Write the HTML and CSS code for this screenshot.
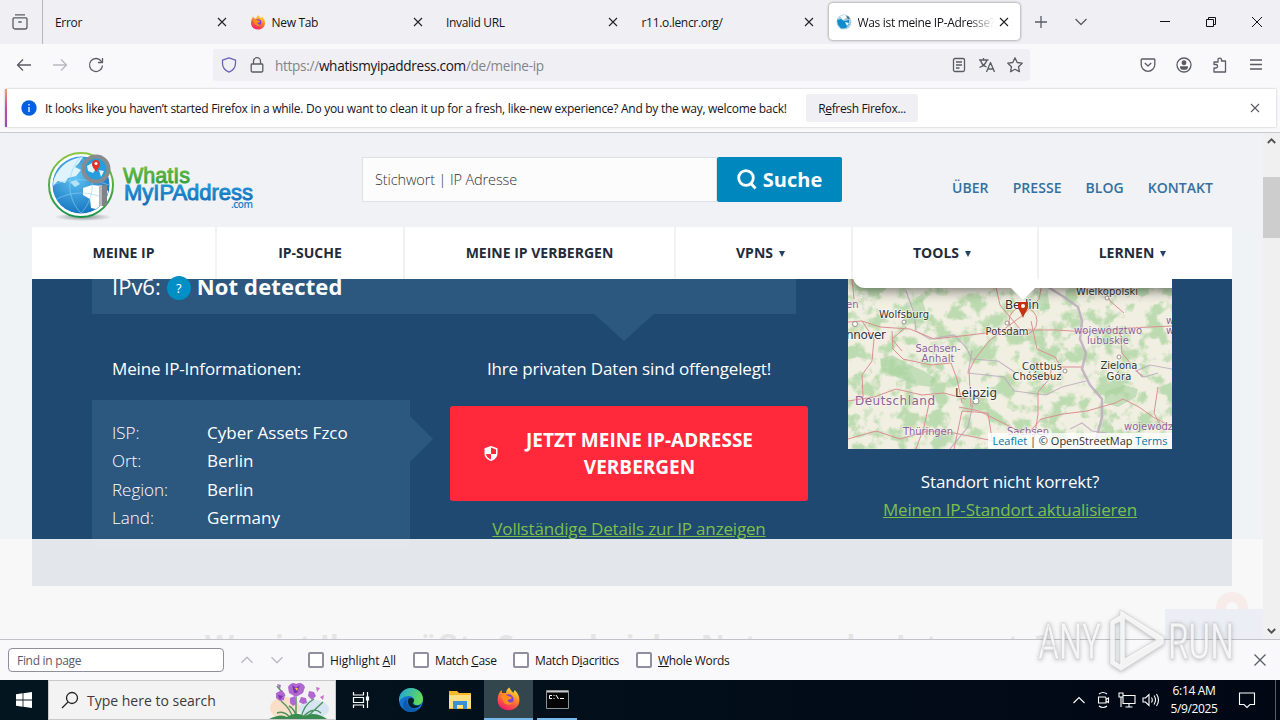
FILE: index.html
```html
<!DOCTYPE html>
<html lang="de">
<head>
    <meta charset="UTF-8">
    <meta name="viewport" content="width=device-width, initial-scale=1.0">
    <title>Was ist meine IP-Adresse?</title>
    <link rel="stylesheet" href="styles.css">
</head>
<body>
    <!-- Tab strip -->
    <div class="tabs">
        <div class="tab-view">
            <svg width="18" height="18" viewBox="0 0 18 18" class="line"><path d="M4 1.800h10M3 4.800h12a1 1 0 0 1 1 1V14a2 2 0 0 1-2 2H4a2 2 0 0 1-2-2V5.800a1 1 0 0 1 1-1zM7.300 9h3.400"/></svg>
        </div>
        <div class="tab"><span>Error</span><svg class="x" viewBox="0 0 10 10"><path d="M1 1l8 8M9 1l-8 8"/></svg></div>
        <div class="tab">
            <svg class="favicon" viewBox="0 0 32 32"><use href="#firefox"/></svg>
            <span>New Tab</span><svg class="x" viewBox="0 0 10 10"><path d="M1 1l8 8M9 1l-8 8"/></svg>
        </div>
        <div class="tab"><span>Invalid URL</span><svg class="x" viewBox="0 0 10 10"><path d="M1 1l8 8M9 1l-8 8"/></svg></div>
        <div class="tab"><span>r11.o.lencr.org/</span><svg class="x" viewBox="0 0 10 10"><path d="M1 1l8 8M9 1l-8 8"/></svg></div>
        <div class="tab active">
            <svg class="favicon" viewBox="0 0 16 16"><circle cx="8" cy="8" r="7.500" fill="#a9cfdf"/><path d="M1 6l4-1 3 2 5-1v4l-3 4-5 .5-3-4z" fill="#118ccf"/><path d="M4 2l5-1 2 2-4 3zM9 8l4 1-2 3z" fill="#f4fbfd"/><path d="M10 1.500a7 7 0 0 1 4 3l-2 1z" fill="#58727d"/></svg>
            <span class="t-was">Was ist meine IP-Adresse?</span><svg class="x" viewBox="0 0 10 10"><path d="M1 1l8 8M9 1l-8 8"/></svg>
        </div>
        <div class="tab-tools">
            <svg width="12" height="12" viewBox="0 0 12 12" class="line"><path d="M6 0v12M0 6h12"/></svg>
            <svg width="12" height="8" viewBox="0 0 12 8" class="line"><path d="M.5 1L6 6.500 11.500 1"/></svg>
        </div>
        <div class="win-buttons">
            <svg width="12" height="12" viewBox="0 0 12 12"><path d="M1 5.500h10"/></svg>
            <svg width="12" height="12" viewBox="0 0 12 12"><path d="M1.500 3.500h7v7h-7zM3.500 3V1.500h7v7H9"/></svg>
            <svg width="12" height="12" viewBox="0 0 12 12"><path d="M1 1l10 10M11 1L1 11"/></svg>
        </div>
    </div>

    <!-- Address bar -->
    <div class="toolbar">
        <div class="nav-buttons">
            <svg width="16" height="16" viewBox="0 0 16 16" class="line"><path d="M15 8H1.500M7 2.500L1.500 8 7 13.500"/></svg>
            <svg width="16" height="16" viewBox="0 0 16 16" class="line dim"><path d="M1 8h13.500M9 2.500L14.500 8 9 13.500"/></svg>
            <svg width="16" height="16" viewBox="0 0 16 16" class="line"><path d="M13.500 4.500A6.500 6.500 0 1 0 14.500 8.500M14.500 1v4.500H10"/></svg>
        </div>
        <div class="urlbar">
            <svg width="16" height="16" viewBox="0 0 16 16" class="line shield"><path d="M8 .8l6.500 2.400v3.300c0 4-2.600 7-6.500 8.700C4.100 13.500 1.500 10.500 1.500 6.500V3.200z"/></svg>
            <svg width="16" height="16" viewBox="0 0 16 16" class="line"><path d="M3 7h10a.8.8 0 0 1 .8.8v6a1.200 1.200 0 0 1-1.200 1.200H3.400a1.200 1.200 0 0 1-1.200-1.200v-6A.8.8 0 0 1 3 7zM4.500 7V4.200a3.500 3.500 0 0 1 7 0V7"/></svg>
            <span class="url">https://<b>whatismyipaddress.com</b>/de/meine-ip</span>
            <div class="url-actions">
                <svg width="16" height="16" viewBox="0 0 16 16" class="line"><rect x="2.500" y="1.500" width="11" height="13" rx="1.500"/><path d="M5 5h6M5 8h6M5 11h3.500"/></svg>
                <svg width="18" height="16" viewBox="0 0 18 16" class="line"><path d="M1 3h9.500M5.500 1v2M2.500 3c1 4 3.500 6 6 7M8.800 3C8 6.500 5 9 1.500 10.500M8.500 15l4-9.500 4 9.500M10 12h5"/></svg>
                <svg width="16" height="16" viewBox="0 0 16 16" class="line"><path d="M8 .9l2.200 4.600 5 .7-3.700 3.500.9 5L8 12.300l-4.400 2.400.9-5L.8 6.200l5-.7z"/></svg>
            </div>
        </div>
        <div class="menu-buttons">
            <svg width="16" height="16" viewBox="0 0 16 16" class="line"><path d="M2 2h12a.8.8 0 0 1 .8.800V7.500a6.800 6.800 0 0 1-13.600 0V2.800A.8.800 0 0 1 2 2zM4.800 6L8 9l3.200-3"/></svg>
            <svg width="16" height="16" viewBox="0 0 16 16" class="line"><circle cx="8" cy="8" r="7"/><circle cx="8" cy="5.800" r="1.800" fill="#5b5b66"/><path d="M4.600 10h6.800c0 1.400-1.300 2.200-3.400 2.200s-3.400-.8-3.400-2.200z" fill="#5b5b66"/></svg>
            <svg width="16" height="16" viewBox="0 0 16 16" class="line"><path d="M6 4V2.800a1.700 1.700 0 0 1 3.500 0V4H13.500v11H2V11h1.800a1.700 1.700 0 0 0 0-3.500H2V5h4z"/></svg>
            <svg width="16" height="16" viewBox="0 0 16 16" class="line"><path d="M2 3h12M2 7.500h12M2 12h12"/></svg>
        </div>
    </div>

    <!-- Refresh notification -->
    <div class="notice-wrap">
        <div class="notice">
            <svg width="16" height="16" viewBox="0 0 16 16"><circle cx="8" cy="8" r="7.700" fill="#0060df"/><path d="M8 7v5M8 4v1.500" stroke="#fff" stroke-width="1.300"/></svg>
            <span class="notice-text">It looks like you haven’t started Firefox in a while. Do you want to clean it up for a fresh, like-new experience? And by the way, welcome back!</span>
            <button class="refresh">R<u>e</u>fresh Firefox...</button>
            <svg class="x notice-x" viewBox="0 0 10 10"><path d="M1 1l8 8M9 1l-8 8"/></svg>
        </div>
    </div>

    <!-- Web page -->
    <div class="viewport">
        <div class="page">
            <header class="header">
                <svg class="logo" width="220" height="76" viewBox="0 0 220 76">
                    <defs>
                        <radialGradient id="sea" cx=".4" cy=".35" r=".7"><stop offset="0" stop-color="#62c4f3"/><stop offset="1" stop-color="#1272be"/></radialGradient>
                        <linearGradient id="ring" x1="0" y1="0" x2="0" y2="1"><stop offset="0" stop-color="#8cc63f"/><stop offset="1" stop-color="#159447"/></linearGradient>
                        <linearGradient id="green" x1="0" y1="0" x2="0" y2="1"><stop offset="0" stop-color="#7cc142"/><stop offset="1" stop-color="#259a3e"/></linearGradient>
                        <linearGradient id="blue" x1="0" y1="0" x2="0" y2="1"><stop offset="0" stop-color="#22a0dd"/><stop offset="1" stop-color="#1267b5"/></linearGradient>
                        <radialGradient id="shade"><stop offset="0" stop-color="#8c9094"/><stop offset="1" stop-color="#f0f2f5"/></radialGradient>
                    </defs>
                    <ellipse cx="43" cy="67" rx="29" ry="4" fill="url(#shade)"/>
                    <circle cx="41" cy="35" r="32" fill="#fff" stroke="url(#ring)" stroke-width="2"/>
                    <circle cx="41" cy="35" r="28.500" fill="url(#sea)"/>
                    <path d="M19 20c5-7 14-12 24-13l-4 6-4 4 6 3-5 6-8 2-3 5-7-2-5 5c0-6 2-11 6-16z" fill="#dff3fd"/>
                    <path d="M43 38l9-3 10 1 6 5c-1 8-5 13-12 18l-5-1-1-9-7-4z" fill="#fff"/>
                    <path d="M30 32l6-2 4 4-5 3zM23 28l3 3" fill="#b5e2f7"/>
                    <path d="M13 35c15-7 38-7 56 0M17 49c15-8 34-8 48 0M41 7c-15 15-15 41 0 56M41 7c15 15 15 41 0 56" fill="none" stroke="#8ed2f4" stroke-width=".6"/>
                    <rect x="59" y="35" width="8" height="21" fill="#7e8387"/><path d="M59 35h3v21h-3z" fill="#b6babd"/>
                    <circle cx="56" cy="19" r="12.500" fill="#269ddd" stroke="#858b90" stroke-width="4"/>
                    <path d="M47 16l5-3 5 5-4 5-5-2zM59 20l5 1-3 6z" fill="#dff3fb"/>
                    <path d="M56 22c-2-4-4-5-4-8a4 4 0 0 1 8 0c0 3-2 4-4 8z" fill="#e03427"/><circle cx="56" cy="13.500" r="1.500" fill="#fff"/>
                    <g font-family="Liberation Sans" stroke-width=".9">
                        <text x="83" y="32.500" font-size="22" fill="url(#green)" stroke="url(#green)" textLength="67" lengthAdjust="spacingAndGlyphs">WhatIs</text>
                        <text x="84" y="50" font-size="22" fill="url(#blue)" stroke="url(#blue)" textLength="129" lengthAdjust="spacingAndGlyphs">MyIPAddress</text>
                    </g>
                    <text x="191" y="58" font-family="Open Sans" font-weight="600" font-size="10" fill="#1d82c6" textLength="22">.com</text>
                </svg>
                <div class="search">
                    <div class="search-input">Stichwort | IP Adresse</div>
                    <div class="search-button">
                        <svg width="20" height="21" viewBox="0 0 20 21"><circle cx="9" cy="9" r="7.300"/><path d="M13.500 14l5 5.500"/></svg>
                        <span>Suche</span>
                    </div>
                </div>
                <div class="links">
                    <a>ÜBER</a><a>PRESSE</a><a>BLOG</a><a>KONTAKT</a>
                </div>
            </header>

            <nav class="main-nav">
                <div><span>MEINE IP</span></div>
                <div><span>IP-SUCHE</span></div>
                <div><span>MEINE IP VERBERGEN</span></div>
                <div><span>VPNS</span><i></i></div>
                <div><span>TOOLS</span><i></i></div>
                <div><span>LERNEN</span><i></i></div>
            </nav>

            <section class="hero">
                <div class="hero-main">
                    <div class="ipv6"><span class="ip-label">IPv6:</span><span class="help">?</span><strong>Not detected</strong></div>
                    <div class="hero-cols">
                        <div class="info">
                            <p class="t-info">Meine IP-Informationen:</p>
                            <div class="info-box">
                                <span>ISP:</span><b>Cyber Assets Fzco</b>
                                <span>Ort:</span><b>Berlin</b>
                                <span>Region:</span><b>Berlin</b>
                                <span>Land:</span><b>Germany</b>
                            </div>
                        </div>
                        <div class="exposed">
                            <p>Ihre privaten Daten sind offengelegt!</p>
                            <div class="cta">
                                <svg width="16" height="18" viewBox="0 0 16 18"><path d="M8 1l6.500 2.300v5.200c0 3.600-2.500 6-6.500 7.500-4-1.500-6.500-3.900-6.500-7.500V3.300z" fill="#fff"/><path d="M8 2.600l5 1.800V9H8zM3 9h5v5.500C5 13.200 3.300 11.600 3 9z" fill="#ff293b"/></svg>
                                <span>JETZT MEINE IP-ADRESSE VERBERGEN</span>
                            </div>
                            <a class="green">Vollständige Details zur IP anzeigen</a>
                        </div>
                    </div>
                </div>
                <div class="location">
                    <div class="map">
                        <svg width="324" height="170" viewBox="0 0 324 170">
                            <defs>
                                <filter id="wood" x="0" y="0" width="100%" height="100%" color-interpolation-filters="sRGB">
                                    <feTurbulence type="fractalNoise" baseFrequency=".06" numOctaves="5" seed="8"/>
                                    <feColorMatrix values="0 0 0 0 .74  0 0 0 0 .86  0 0 0 0 .69  6 0 0 0 -2.8"/>
                                </filter>
                            </defs>
                            <rect width="324" height="170" fill="#f1efe2"/>
                            <rect width="324" height="170" filter="url(#wood)"/>
                            <g fill="#a8d3a0" opacity=".6">
                                <path d="M32 80l12-4 14 8 18 8 12 8-4 8-16-2-14-6-20-8z"/>
                                <path d="M258 112l18-6 14 4-2 8-18 10-14-4z"/><path d="M62 24l12-4 4 12-10 6z"/><path d="M188 12l12 4 2 14-10 2z"/>
                            </g>
                            <!-- borders -->
                            <g fill="none" stroke="#bba8bd" stroke-width="1.200" opacity=".8">
                                <path d="M200 8l16 10 14 10 4 14-2 18 6 14-4 16 8 16 12 14v18l-6 22" stroke-width="2.500"/>
                                <path d="M58 12l8 22 2 18 14 8 24-4 12 12 6 12 26 2 18 12M124 72l-4 22 36 4 10 14 32 4 16-8 24-6M102 170l18-22 6-28 20-6M324 90l-22-4-14 6 8 6 14-4"/>
                                <path d="M222 150l12-6 10 8 14 2-2 12 16 4"/>
                            </g>
                            <!-- motorways -->
                            <g fill="none" stroke="#dc8f93" stroke-width="1">
                                <path d="M0 43l14-1 18 6 30 2 24 10 36-4 40-5h46l32 2 40-4 44-2"/>
                                <path d="M14 42l12 18-2 22-10 14 1 22M44 52l1 18 10 10 28 6 20-2 6 16 5 24M123 128l-2-36 6-12 14-18 18-14 16-12 16-16 4-20"/>
                                <path d="M111 128l20 4 28 14 20 10 14-16 22-5 24-3 28-8 8-4 16 8 14 10 19 10"/>
                                <path d="M183 42l6 28 18 8 6 10h20M190 135v-22l12-14 2-14M0 122l26-4 22-8 26 6 22-2 22 6M68 170l8-22 6-28M148 8l4 18 20 24M252 0l10 22 14 12M272 52l2 22 20 24M0 160l28-8 24 8 28-8 26 2 40 8"/>
                                <path d="M106 170l8-38 26 2 4 26M190 135l-4 26M310 108l-4 26 8 16M4 0l2 20M58 48l-14 12 10 12"/>
                                <circle cx="175" cy="42" r="14"/>
                            </g>
                            <g fill="#fff" stroke="#887b7b" stroke-width=".8"><circle cx="7" cy="45" r="2.500"/><circle cx="56" cy="43" r="2"/><circle cx="159" cy="44" r="2"/><circle cx="128" cy="122" r="3"/><circle cx="217" cy="92" r="2"/><circle cx="271" cy="78" r="2"/><circle cx="259" cy="19" r="2"/></g>
                            <g class="places" text-anchor="middle">
                                <text x="259" y="16" font-size="10" textLength="62">Wielkopolski</text>
                                <text x="56" y="39" font-size="10" textLength="50">Wolfsburg</text>
                                <text x="18" y="60" font-size="12" textLength="40">nnover</text>
                                <text x="174" y="30" font-size="12" textLength="34">Berlin</text>
                                <text x="159" y="56" font-size="10" textLength="43">Potsdam</text>
                                <text x="194" y="91" font-size="10" textLength="40">Cottbus</text>
                                <text x="189" y="101" font-size="10" textLength="49">Chóśebuz</text>
                                <text x="271" y="90" font-size="10" textLength="37">Zielona</text>
                                <text x="271" y="101" font-size="10" textLength="25">Góra</text>
                                <text x="128" y="118" font-size="12" textLength="42">Leipzig</text>
                            </g>
                            <g class="regions" text-anchor="middle">
                                <text x="-2" y="29" font-size="10" text-anchor="start">en</text>
                                <text x="90" y="73" font-size="10" textLength="45">Sachsen-</text>
                                <text x="90" y="83" font-size="10" textLength="33">Anhalt</text>
                                <text x="260" y="55" font-size="10" textLength="68">województwo</text>
                                <text x="260" y="65" font-size="10" textLength="42">lubuskie</text>
                                <text x="47" y="126" font-size="12" textLength="80">Deutschland</text>
                                <text x="80" y="156" font-size="10" textLength="50">Thüringen</text>
                                <text x="180" y="156" font-size="10" textLength="42">Sachsen</text>
                                <text x="276" y="151" font-size="10" text-anchor="start">województwo</text>
                                <text x="318" y="45" font-size="10" text-anchor="start">w</text>
                                <text x="318" y="55" font-size="10" text-anchor="start">w</text>
                            </g>
                            <path d="M175 39c-2-6-5-8-5-12v-4h10v4c0 4-3 6-5 12z" fill="#c8330f"/><circle cx="175" cy="27" r="2" fill="#fff"/>
                        </svg>
                        <div class="popup"></div>
                        <div class="credit"><a>Leaflet</a> | © OpenStreetMap <a>Terms</a></div>
                    </div>
                    <p>Standort nicht korrekt?</p>
                    <a class="green">Meinen IP-Standort aktualisieren</a>
                </div>
            </section>
            <h2>Was ist Ihre größte Sorge bei der Nutzung des Internets?</h2>

            <div class="pin"></div>
            <div class="chat"></div>
            <div class="banner"></div>
        </div>
        <div class="scrollbar">
            <svg width="9" height="6" viewBox="0 0 9 6"><path d="M.8 5L4.500 1.300 8.200 5"/></svg>
            <div class="thumb"></div>
            <svg width="9" height="6" viewBox="0 0 9 6"><path d="M.8 1l3.700 3.700L8.200 1"/></svg>
        </div>
    </div>

    <!-- Find bar -->
    <div class="findbar">
        <div class="find-input">Find in page</div>
        <svg width="12" height="8" viewBox="0 0 12 8" class="line dim"><path d="M.5 6.800L6 1.300l5.500 5.500"/></svg>
        <svg width="12" height="8" viewBox="0 0 12 8" class="line dim"><path d="M.5 1.200L6 6.700l5.500-5.500"/></svg>
        <label class="f-high"><i></i><span>Highlight <u>A</u>ll</span></label>
        <label class="f-case"><i></i><span>Match <u>C</u>ase</span></label>
        <label class="f-dia"><i></i><span>Match D<u>i</u>acritics</span></label>
        <label class="f-whole"><i></i><span><u>W</u>hole Words</span></label>
        <svg width="14" height="14" viewBox="0 0 14 14" class="line find-x"><path d="M1.500 1.500l11 11M12.500 1.500l-11 11"/></svg>
    </div>

    <!-- Taskbar -->
    <div class="taskbar">
        <div class="task start"><svg width="16" height="16" viewBox="0 0 16 16" fill="#fff"><path d="M0 2.200l6.600-.9v6.300H0zM7.400 1.200L16 0v7.600H7.400zM0 8.400h6.600v6.300L0 13.800zM7.400 8.400H16V16l-8.600-1.200z"/></svg></div>
        <div class="task-search">
            <svg width="18" height="18" viewBox="0 0 18 18" fill="none" stroke="#222" stroke-width="1.300"><circle cx="11" cy="7" r="5.500"/><path d="M7 11l-6 6"/></svg>
            <span>Type here to search</span>
            <svg class="iris" width="72" height="38" viewBox="0 0 72 38">
                <ellipse cx="22" cy="27" rx="15" ry="11" fill="#f9dfc8"/><ellipse cx="51" cy="28" rx="15" ry="9" fill="#d5e6f2"/>
                <g fill="none" stroke="#4c9361" stroke-width="1.400"><path d="M33 38V16M18 20q10 8 12 18M38 38q2-14 13-20M28 38q-6-9-14-6M38 38q12-14 20-6M34 38q-2-10-8-13M44 36l16-15M14 5l8 10"/></g>
                <g fill="#b067d0"><path d="M25 6q4-6 8-3 6-3 9 3l-2 6-7 4-7-4z"/><path d="M13 12l6-3 3 4-1 6-4 1-4-3zM27 17l5-2 1 8-3 2-3-3zM38 16l5 1 1 5-4 1-4-2zM46 10l5 1 2 4-4 4-4-4zM14 3l4 1-1 4z"/></g>
                <g fill="#7a35b0"><path d="M29 4l4 3 4-3-3 8h-3zM15 14l5 1-3 4z"/></g>
                <path d="M32 7h3l-1 3z" fill="#f5c644"/>
                <path d="M6 38q12-6 18-2 9-6 17-1 11-5 23 3z" fill="#3a8b4f"/>
                <path d="M53 6l4 1-3 4zM57 16l4-2-1 5z" fill="#cc71cb"/>
            </svg>
        </div>
        <div class="task view"><svg width="18" height="18" viewBox="0 0 18 18" fill="none" stroke="#fff" stroke-width="1.200"><path d="M1.500 1v3h10V1M1.500 17v-3h10v3M1.500 6.500h10v5h-10zM15.500 1v16"/><path d="M14.500 6h2v3h-2z" fill="#fff"/></svg></div>
        <div class="task">
            <svg width="26" height="26" viewBox="0 0 26 26">
                <defs><linearGradient id="eg" x1="0" y1="0" x2="1" y2=".3"><stop offset="0" stop-color="#1da4e2"/><stop offset="1" stop-color="#61d95c"/></linearGradient></defs>
                <circle cx="13" cy="13" r="12" fill="#1473cf"/>
                <path d="M1 12C2 5 7 1 13 1c7 0 12 5 12 11 0 4-3 6-6 6-2 0-4-1-3-3 1-4-2-6-5-6-5 0-9 3-10 6z" fill="url(#eg)"/>
                <path d="M9 12c-1 6 3 10 8 10l5-1c-4 4-11 5-16 2-2-5-1-9 3-11z" fill="#0e5bae"/>
                <path d="M10 14c0-4 5-4 6-1 0 2-2 3-1 4 2 2 6 2 8 0-2 5-13 7-13-3z" fill="#04202b"/>
            </svg>
        </div>
        <div class="task"><svg width="22" height="20" viewBox="0 0 22 20"><path d="M0 1h8l2 2h12v16H0z" fill="#f7b82d"/><path d="M0 5h22v13H0z" fill="#fee084"/><path d="M4 11h14v8h-4v-4H8v4H4z" fill="#3b90d5"/></svg></div>
        <div class="task firefox-task">
            <svg width="25" height="25" viewBox="0 0 32 32"><g id="firefox"><defs><linearGradient id="fx" x1=".8" y1="0" x2=".3" y2="1"><stop offset="0" stop-color="#fff044"/><stop offset=".45" stop-color="#ff8426"/><stop offset="1" stop-color="#f4196d"/></linearGradient></defs><path d="M2 18c0-6 2-10 5-13l1 4 5 0c0-3 1-5 4-7 1 3 4 5 5 7l2-4c4 4 6 8 6 13 0 8-6 13-14 13S2 26 2 18z" fill="url(#fx)"/><circle cx="16" cy="17" r="6.500" fill="#7b44d8"/><path d="M6 13c4-3 8-2 10 0 3 0 4 1 4 3l-5 2c0 3 4 4 7 2-2 5-9 5-12 1-2-3-2-6-4-8z" fill="#ff8b21"/></g></svg>
        </div>
        <div class="task cmd"><svg width="23" height="19" viewBox="0 0 23 19"><path d="M.5.500h22v18H.5z" fill="#050505" stroke="#8d9498"/><path d="M1 1h21v1.500H1z" fill="#c9c9c9"/><path d="M6 5.500H3.500v3H6M8 5v1M8 8v1M10 5l2.500 4M14 8.500h4" stroke="#fff" fill="none"/></svg></div>
        <div class="tray">
            <svg width="18" height="10" viewBox="0 0 14 10"><path d="M1.500 8L7 2.500 12.500 8"/></svg>
            <svg width="18" height="18" viewBox="0 0 14 18"><path d="M2.500 6h6.500a1 1 0 0 1 1 1v5H2.500zM10 8.500l2.500-1.500v4.500L10 10M3 3q4-3 8 0M3 15q4 3 8 0"/></svg>
            <svg width="18" height="16" viewBox="0 0 18 16"><path d="M5 3.500h12v8H5zM11 12v3M7.500 15h7M1 1h4v4H1zM3 5v10"/></svg>
            <svg width="18" height="16" viewBox="0 0 18 16"><path d="M1 6h2.500L7 2.500v11L3.500 10H1zM9.500 5.500q1.600 2.500 0 5M12 3.500q3 4.500 0 9M14.500 2q4 6 0 12"/></svg>
            <div class="clock"><span>6:14 AM</span><span>5/9/2025</span></div>
            <svg class="bell" width="18" height="18" viewBox="0 0 18 18"><path d="M1.500 2h15v11.500H12L9 16.500 6 13.500H1.500z"/></svg>
            <div class="show-desktop"></div>
        </div>
    </div>

    <!-- Watermark -->
    <svg class="watermark" width="204" height="70" viewBox="0 0 204 70">
        <g fill="#fff" fill-opacity=".8" stroke="#c4c6ca" stroke-opacity=".6" stroke-width=".8">
            <g font-family="Roboto" font-size="49">
                <text transform="translate(4 54) scale(.68 1)" textLength="93" lengthAdjust="spacingAndGlyphs">ANY</text>
                <text transform="translate(134 54) scale(.68 1)" textLength="97" lengthAdjust="spacingAndGlyphs">RUN</text>
            </g>
            <path fill-rule="evenodd" d="M86 5l44 27v7L87 66l-11-7V16l10-6zM91 14v39l31-18zM81 19v37l5 3V17z"/>
        </g>
    </svg>
</body>
</html>
```

FILE: styles.css
```css
* {
    box-sizing: border-box;
}
body {
    margin: 0;
    width: 1280px;
    height: 720px;
    overflow: hidden;
    position: relative;
    display: flex;
    flex-direction: column;
    font-family: "Open Sans", sans-serif;
    font-size: 12px;
    color: #15141a;
    background: #f9f9fb;
}
svg {
    flex: none;
    display: block;
}
p, h2 {
    margin: 0;
}
span, b, a {
    white-space: nowrap;
}
.line {
    fill: none;
    stroke: #5b5b66;
    stroke-width: 1.3;
    stroke-linejoin: round;
}
.dim {
    opacity: 0.4;
}
.x {
    width: 10px;
    height: 10px;
    fill: none;
    stroke: #222;
    stroke-width: 1.1;
}

/* Tabs */
.tabs {
    height: 44px;
    display: flex;
    background: #f0f0f4;
    letter-spacing: -0.32px;
}
.tab-view {
    width: 43px;
    padding-right: 3px;
    display: flex;
    align-items: center;
    justify-content: center;
    border-right: 1px solid #b5b5bb;
}
.tab {
    width: 195.5px;
    padding: 0 11.5px 0 12px;
    display: flex;
    align-items: center;
}
.tab span {
    flex: 1;
    overflow: hidden;
    padding-top: 1px;
}
.favicon {
    width: 16px;
    height: 16px;
    margin-left: -1px;
    margin-right: 6px;
}
.tab.active {
    width: 191px;
    height: 37px;
    margin: 3px 0 0 3.5px;
    padding: 0 11px 0 8px;
    background: #fff;
    border-radius: 4px;
    box-shadow: 0 0 3px rgba(0, 0, 0, 0.5);
}
.t-was {
    margin-right: 4px;
    -webkit-mask-image: linear-gradient(to right, #000 80%, transparent);
}
.tab-tools {
    display: flex;
    align-items: center;
    gap: 28px;
    margin-left: 15px;
}
.win-buttons {
    display: flex;
    align-items: center;
    gap: 34px;
    margin-left: auto;
    padding-right: 17px;
    fill: none;
    stroke: #111;
}

/* Address bar */
.toolbar {
    height: 42px;
    display: flex;
    align-items: center;
}
.nav-buttons {
    width: 213px;
    padding-left: 16px;
    display: flex;
    gap: 20px;
}
.urlbar {
    width: 817px;
    height: 32px;
    padding-left: 8px;
    display: flex;
    align-items: center;
    gap: 12px;
    background: #f0f0f4;
    border-radius: 3px;
}
.shield {
    stroke: #6a63b5;
}
.url {
    margin-left: -2px;
    font-size: 13.6px;
    letter-spacing: -0.31px;
    color: #83838b;
}
.url b {
    font-weight: 400;
    color: #15141a;
}
.url-actions {
    display: flex;
    gap: 11px;
    margin-left: auto;
    padding-right: 7px;
}
.menu-buttons {
    display: flex;
    gap: 20px;
    margin-left: auto;
    padding-right: 16px;
}

/* Notification */
.notice-wrap {
    height: 47px;
    padding: 3px 4px 5px 5px;
    border-bottom: 1px solid #c9c9d0;
}
.notice {
    height: 38px;
    padding-left: 14px;
    display: flex;
    align-items: center;
    background: #fff;
    border-left: 2px solid;
    border-image: linear-gradient(#f5a36a, #d3459a, #8a4fc0) 1;
    box-shadow: 0 0 2px rgba(0, 0, 0, 0.25);
}
.notice-text {
    width: 745px;
    margin-left: 8px;
    padding-top: 1px;
    letter-spacing: -0.285px;
}
.refresh {
    width: 112px;
    height: 28px;
    margin-left: 16px;
    padding: 1px 0 0;
    border: 0;
    border-radius: 3px;
    background: #f0f0f4;
    color: #15141a;
    font: 12px "Open Sans", sans-serif;
    letter-spacing: -0.35px;
}
.notice-x {
    margin-left: auto;
    margin-right: 16px;
    stroke: #5b5b66;
}

/* Page */
.viewport {
    height: 506px;
    display: flex;
}
.page {
    position: relative;
    width: 1263px;
    overflow: hidden;
    background: #f0f3f6;
}
.header {
    height: 94px;
    padding-left: 40px;
    display: flex;
    background: #f0f2f5;
}
.logo {
    margin-top: 17px;
}
.search {
    width: 480px;
    height: 45px;
    display: flex;
    margin: 24px 0 0 102px;
}
.search-input {
    flex: 1;
    padding: 11px 12px;
    font-size: 14.5px;
    font-weight: 300;
    line-height: 22px;
    letter-spacing: -0.12px;
    color: #333;
    background: #fcfcfc;
    border: 1px solid #dfe1e4;
}
.search-button {
    width: 125px;
    display: flex;
    align-items: center;
    justify-content: center;
    gap: 6px;
    border-radius: 2px;
    background: #0087be;
    color: #fff;
    font-size: 20px;
    font-weight: 700;
}
.search-button svg {
    fill: none;
    stroke: #fff;
    stroke-width: 2.8;
}
.links {
    display: flex;
    gap: 24px;
    margin-left: auto;
    padding: 45px 50px 0 0;
    font-size: 14px;
    line-height: 20px;
    font-weight: 600;
    letter-spacing: 0.05px;
    color: #34709f;
}
.main-nav {
    width: 1200px;
    height: 52px;
    margin-left: 32px;
    display: grid;
    grid-template-columns: 185px 188px 271px 177px 186px 193px;
    background: #fff;
    color: #232c3a;
    font-size: 14px;
    font-weight: 700;
}
.main-nav div {
    display: flex;
    align-items: center;
    justify-content: center;
    padding-bottom: 2px;
    border-right: 2px solid #f0f2f5;
}
.main-nav div:last-child {
    border-right: 0;
}
.main-nav i {
    margin: 3px 6px 0;
    border: 3px solid transparent;
    border-top: 6px solid #234469;
    border-bottom: 0;
}
.hero {
    width: 1200px;
    height: 307px;
    margin-left: 32px;
    padding-left: 60px;
    display: flex;
    gap: 40px;
    background: #1f4971;
    color: #fff;
    font-size: 17px;
    letter-spacing: -0.16px;
}
.hero-main {
    width: 716px;
}
.ipv6 {
    position: relative;
    width: 704px;
    height: 35px;
    padding-left: 20px;
    display: flex;
    background: #2c577f;
    font-size: 22px;
    line-height: 30px;
    letter-spacing: 0;
}
.ip-label, .ipv6 strong {
    margin-top: -8px;
}
.ipv6 strong {
    letter-spacing: 0.15px;
}
.ipv6::after {
    content: "";
    position: absolute;
    left: 502px;
    top: 35px;
    border: 30px solid transparent;
    border-top: 27px solid #2c577f;
    border-bottom: 0;
}
.help {
    width: 24px;
    height: 24px;
    margin: -3px 6px 0;
    border-radius: 50%;
    background: #008fc5;
    font-size: 13px;
    line-height: 24px;
    text-align: center;
}
.hero-cols {
    display: flex;
    gap: 40px;
    padding-top: 41px;
}
.hero p {
    line-height: 28px;
    white-space: nowrap;
}
.info {
    width: 318px;
}
.t-info {
    padding-left: 20px;
}
.info-box {
    position: relative;
    height: 147px;
    margin-top: 17px;
    padding: 19px 20px 0;
    display: grid;
    grid-template-columns: 95px 1fr;
    grid-auto-rows: 28.4px;
    line-height: 28px;
    letter-spacing: 0;
    background: #2c577f;
}
.info-box span {
    font-weight: 300;
}
.info-box b {
    font-weight: 400;
}
.info-box::after {
    content: "";
    position: absolute;
    left: 318px;
    top: 16px;
    border: 23px solid transparent;
    border-left-color: #2c577f;
    border-right: 0;
}
.exposed {
    width: 358px;
    display: flex;
    flex-direction: column;
    align-items: center;
}
.cta {
    width: 358px;
    height: 95px;
    margin: 23px 0 14px;
    padding: 0 50px 0 33px;
    display: flex;
    align-items: center;
    gap: 22px;
    background: #ff293b;
    border-radius: 3px;
    font-size: 19px;
    line-height: 27px;
    letter-spacing: 0;
    font-weight: 700;
    text-align: center;
}
.cta span {
    flex: 1;
    white-space: normal;
}
.green {
    line-height: 28px;
    color: #7cc04b;
    letter-spacing: -0.17px;
    text-decoration: underline;
}
.location {
    width: 324px;
    text-align: center;
}
.map {
    position: relative;
    height: 170px;
    margin-bottom: 19px;
    overflow: hidden;
    font-family: "DejaVu Sans", sans-serif;
    letter-spacing: 0;
}
.places {
    fill: #333;
    stroke: #fff;
    stroke-opacity: 0.7;
    stroke-width: 1.5;
    paint-order: stroke;
}
.regions {
    fill: #8d5f96;
    stroke: #fff;
    stroke-opacity: 0.6;
    stroke-width: 1;
    paint-order: stroke;
}
.popup {
    position: absolute;
    left: 5px;
    top: -12px;
    width: 330px;
    height: 21px;
    background: #fff;
    border-bottom-left-radius: 12px;
    box-shadow: 0 3px 12px rgba(0, 0, 0, 0.5);
}
.popup::after {
    content: "";
    position: absolute;
    left: 158px;
    top: 21px;
    border: 12px solid transparent;
    border-top-color: #fff;
    border-bottom: 0;
}
.credit {
    position: absolute;
    right: 0;
    bottom: 0;
    width: 184px;
    height: 16px;
    background: rgba(255, 255, 255, 0.8);
    color: #333;
    font: 11px/16px "Open Sans", sans-serif;
    white-space: nowrap;
}
.credit a {
    color: #0078a8;
}
h2 {
    margin: 39px 0 0 205px;
    font-size: 30px;
    line-height: 41px;
    white-space: nowrap;
    color: #33383d;
}
/* translucent ad strip over the bottom of the page */
.banner {
    position: absolute;
    left: 0;
    bottom: 0;
    width: 1263px;
    height: 100px;
    background: rgba(248, 248, 248, 0.9);
}
.pin {
    position: absolute;
    left: 1216px;
    top: 459px;
    width: 32px;
    height: 32px;
    border: 10px solid #e8776c;
    border-radius: 50%;
}
.chat {
    position: absolute;
    left: 1165px;
    top: 476px;
    width: 98px;
    height: 30px;
    background: #6d8ccb;
}
.scrollbar {
    width: 17px;
    display: flex;
    flex-direction: column;
    align-items: center;
    padding: 5px 0;
    background: #f0f0f0;
    fill: none;
    stroke: #505050;
    stroke-width: 1.8;
}
.thumb {
    width: 17px;
    height: 61px;
    margin: 33px 0 auto;
    background: #cdcdcd;
}

/* Find bar */
.findbar {
    height: 41px;
    padding-left: 8px;
    display: flex;
    align-items: center;
    border-top: 1px solid #c2c2c8;
    letter-spacing: -0.3px;
}
.find-input {
    width: 216px;
    height: 24px;
    padding: 0 8px;
    margin-right: 17px;
    border: 1px solid #8f8f9d;
    border-radius: 4px;
    background: #fff;
    line-height: 23px;
    color: #5b5b66;
}
.findbar svg + svg {
    margin-left: 18px;
}
.findbar label {
    display: flex;
    align-items: center;
    gap: 6px;
}
.findbar label i {
    width: 16px;
    height: 16px;
    border: 2px solid #8f8f9d;
    border-radius: 2px;
    background: #fff;
}
.f-high {
    width: 105px;
    margin-left: 25px;
    letter-spacing: -0.05px;
}
.f-case {
    width: 100px;
}
.f-dia {
    width: 123px;
}
.find-x {
    margin-left: auto;
    margin-right: 13px;
}

/* Taskbar */
.taskbar {
    height: 40px;
    display: flex;
    background: linear-gradient(to right, #03161f, #020d19 60%, #020714);
    color: #fff;
}
.task {
    width: 49px;
    display: flex;
    align-items: center;
    justify-content: center;
}
.start {
    width: 48px;
}
.task-search {
    width: 288px;
    padding-left: 12px;
    display: flex;
    align-items: center;
    background: #f3f3f3;
    border: 1px solid #c7c9cb;
    color: #3b3b3b;
    font-size: 14px;
}
.task-search span {
    margin-left: 8px;
}
.iris {
    margin-left: auto;
}
.view {
    width: 50px;
}
.firefox-task {
    padding-bottom: 2px;
    background: #33454d;
    border-bottom: 2px solid #76b9ed;
}
.cmd {
    width: 40px;
    margin-left: 4px;
    border-bottom: 2px solid #76b9ed;
}
.tray {
    display: flex;
    align-items: center;
    margin-left: auto;
    gap: 6px;
    fill: none;
    stroke: #fff;
    stroke-width: 1.1;
}
.clock {
    width: 52px;
    margin-left: 2px;
    display: flex;
    flex-direction: column;
    align-items: center;
    font-size: 12px;
    letter-spacing: -0.35px;
    line-height: 18px;
}
.bell {
    margin-left: 12px;
}
.show-desktop {
    width: 5px;
    height: 40px;
    margin-left: 13px;
    border-left: 1px solid #56606a;
}
.watermark {
    position: absolute;
    left: 1034px;
    top: 605px;
    filter: drop-shadow(0 1px 2px rgba(0, 0, 0, 0.3));
}
```
